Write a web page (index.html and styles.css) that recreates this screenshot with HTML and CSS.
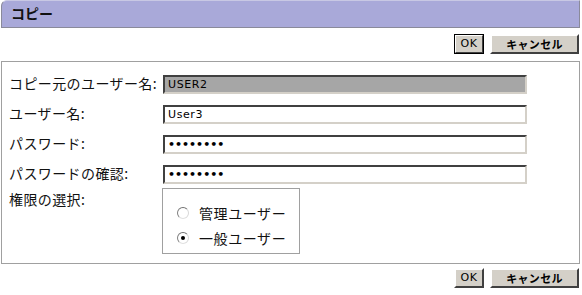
FILE: index.html
```html
<!DOCTYPE html>
<html lang="ja">
<head>
<meta charset="utf-8">
<link rel="stylesheet" href="styles.css">
</head>
<body>
<div class="page">
  <div class="titlebar">コピー</div>
  <div class="actions top">
    <button class="btn default">OK</button>
    <button class="btn wide">キャンセル</button>
  </div>
  <div class="panel">
    <div class="row">
      <label class="lbl">コピー元のユーザー名:</label>
      <input class="field readonly" type="text" value="USER2" readonly>
    </div>
    <div class="row">
      <label class="lbl">ユーザー名:</label>
      <input class="field" type="text" value="User3">
    </div>
    <div class="row">
      <label class="lbl">パスワード:</label>
      <input class="field pw" type="password" value="12345678">
    </div>
    <div class="row">
      <label class="lbl">パスワードの確認:</label>
      <input class="field pw" type="password" value="12345678">
    </div>
    <div class="row last">
      <label class="lbl">権限の選択:</label>
      <div class="group">
        <label class="opt"><span class="radio"></span>管理ユーザー</label>
        <label class="opt"><span class="radio on"></span>一般ユーザー</label>
      </div>
    </div>
  </div>
  <div class="actions bottom">
    <button class="btn">OK</button>
    <button class="btn wide">キャンセル</button>
  </div>
</div>
</body>
</html>
```
FILE: styles.css
```css
* { box-sizing: border-box; }
html, body { margin: 0; padding: 0; background: #fff; }
body {
  font-family: "Noto Sans CJK JP", "DejaVu Sans", sans-serif;
  font-size: 14px;
  color: #000;
}
.page { width: 581px; }
.titlebar {
  height: 28px;
  margin-left: 1px;
  width: 579px;
  background: #a9a9d9;
  border-top: 1px solid #c8c8e4;
  border-left: 1px solid #8a8a9a;
  border-right: 1px solid #8a8a9a;
  border-bottom: 1px solid #8a8a9a;
  border-top-left-radius: 6px;
  padding-left: 9px;
  font-weight: bold;
  font-size: 14px;
  line-height: 25px;
  color: #111;
}
.actions {
  display: flex;
  justify-content: flex-end;
  gap: 6px;
  padding-right: 2px;
  height: 20px;
}
.actions.top { margin-top: 6px; }
.actions.bottom { margin-top: 4px; }
.btn {
  height: 20px;
  width: 30px;
  margin: 0;
  padding: 0;
  background: #d4d0c8;
  border: 2px solid;
  border-color: #fff #404040 #404040 #fff;
  font-family: "DejaVu Sans", sans-serif;
  font-size: 11px;
  font-weight: normal;
  letter-spacing: 0.5px;
  color: #000;
  line-height: 14px;
}
.btn.wide {
  width: 89px;
  font-family: "Noto Sans CJK JP", sans-serif;
  font-weight: bold;
  letter-spacing: 0.3px;
}
.btn.default {
  outline: 1px solid #000;
  outline-offset: -1px;
}
.panel {
  margin-top: 7px;
  margin-left: 1px;
  width: 579px;
  border: 1px solid #a0a0a0;
  padding: 13px 0 9px 7px;
}
.row {
  display: flex;
  align-items: flex-start;
  height: 19px;
  margin-bottom: 11px;
}
.row.last {
  height: 66px;
  margin-bottom: 0;
  margin-top: -7px;
}
.lbl {
  width: 154px;
  height: 16px;
  line-height: 16px;
  letter-spacing: 0.4px;
  color: #111;
  flex: none;
}
.field {
  width: 364px;
  height: 19px;
  margin: 0;
  border: 2px solid;
  border-color: #404040 #d4d0c8 #d4d0c8 #404040;
  padding: 0 3px;
  font-family: "DejaVu Sans", sans-serif;
  font-size: 11px;
  letter-spacing: 0.6px;
  color: #000;
  background: #fff;
  outline: none;
}
.field.readonly { background: #a6a6a6; }
.field.pw { font-size: 11px; font-weight: bold; letter-spacing: 0; }
.row.last .lbl { margin-top: 3px; }
.group {
  margin-left: -1px;
  width: 138px;
  height: 66px;
  border: 1px solid #a0a0a0;
  padding: 16px 0 0 14px;
  display: flex;
  flex-direction: column;
  gap: 9px;
}
.opt {
  display: flex;
  align-items: center;
  height: 16px;
  line-height: 16px;
  letter-spacing: 0.6px;
  color: #111;
}
.radio {
  width: 12px;
  height: 12px;
  border-radius: 50%;
  border: 1px solid;
  border-color: #707070 #d8d8d8 #e0e0e0 #808080;
  background: #fff;
  margin-right: 10px;
  position: relative;
  flex: none;
}
.radio.on::after {
  content: "";
  position: absolute;
  left: 3px;
  top: 3px;
  width: 4px;
  height: 4px;
  border-radius: 50%;
  background: #000;
}
```
